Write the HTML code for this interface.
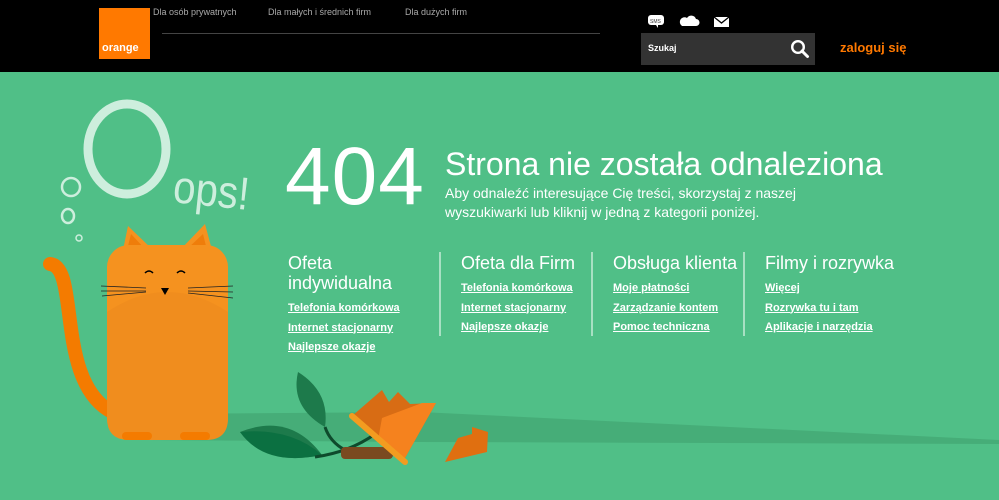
<!DOCTYPE html>
<html><head><meta charset="utf-8"><style>
*{margin:0;padding:0;box-sizing:border-box}
body{width:999px;height:500px;overflow:hidden;background:#50bf87;font-family:"Liberation Sans",sans-serif;position:relative}
.hdr{position:absolute;left:0;top:0;width:999px;height:72px;background:#000}
.abs{position:absolute}
.nav{font-size:9px;color:#aaa;top:7px}
.col h3{font-weight:normal;font-size:18px;color:#fff;line-height:20px;margin-bottom:6px}
.col a{display:block;color:#fff;font-weight:bold;font-size:11px;text-decoration:underline;line-height:19.5px}
.div{position:absolute;top:252px;width:2px;height:84px;background:#a8e0c3}
</style></head><body>
<div class="hdr">
 <div class="abs" style="left:99px;top:8px;width:51px;height:51px;background:#ff7900"></div>
 <div class="abs" style="left:102px;top:42px;color:#fff;font-weight:bold;font-size:11px">orange</div>
 <div class="abs nav" style="left:153px">Dla osób prywatnych</div>
 <div class="abs nav" style="left:268px">Dla małych i średnich firm</div>
 <div class="abs nav" style="left:405px">Dla dużych firm</div>
 <div class="abs" style="left:162px;top:33px;width:438px;height:1px;background:#444"></div>
 <svg class="abs" style="left:648px;top:14px" width="90" height="14">
  <rect x="0" y="1" width="16" height="10" rx="3" fill="#fff"/><path d="M8 11 l2 3 l0-3z" fill="#fff"/>
  <text x="2" y="9" font-size="5" font-family="Liberation Sans" fill="#333">SMS</text>
  <path d="M34 12 h14 a3.5 3.5 0 0 0 0-7 a5 5 0 0 0-9-1 a4 4 0 0 0-5 8z" fill="#fff"/>
  <rect x="66" y="3" width="15" height="10" fill="#fff"/><path d="M66 3 l7.5 6 l7.5-6" stroke="#000" stroke-width="1.3" fill="none"/>
 </svg>
 <div class="abs" style="left:641px;top:33px;width:174px;height:32px;background:#333"></div>
 <div class="abs" style="left:648px;top:43px;color:#fff;font-weight:bold;font-size:9px">Szukaj</div>
 <svg class="abs" style="left:790px;top:39px" width="20" height="20"><circle cx="8" cy="8" r="5.8" stroke="#fff" stroke-width="2.4" fill="none"/><path d="M12 12 l5.5 5.5" stroke="#fff" stroke-width="3" stroke-linecap="round"/></svg>
 <div class="abs" style="left:840px;top:40px;color:#ff7900;font-weight:bold;font-size:13px">zaloguj się</div>
</div>

<svg class="abs" style="left:0;top:72px" width="999" height="428">
 <ellipse cx="127" cy="77" rx="39" ry="45" stroke="#cdeedd" stroke-width="9" fill="none"/>
 <text x="172" y="130" font-family="Liberation Sans" font-size="46" fill="#cdeedd" transform="rotate(6 172 130)" textLength="76" lengthAdjust="spacingAndGlyphs">ops!</text>
 <circle cx="71" cy="115" r="9" stroke="#cdeedd" stroke-width="2.5" fill="none"/>
 <ellipse cx="68" cy="144" rx="6" ry="7" stroke="#cdeedd" stroke-width="2.5" fill="none"/>
 <circle cx="79" cy="166" r="3" stroke="#cdeedd" stroke-width="1.5" fill="none"/>
 <path d="M150 342 L420 340 L999 368 L999 372 L420 370 L150 368 Z" fill="#46ad78"/>
 <path d="M50 192 C80 195 55 310 112 340" stroke="#f47b00" stroke-width="14" fill="none" stroke-linecap="round"/>
 <path d="M123 178 L128 154 L153 178Z M180 178 L205 152 L212 178Z" fill="#f5921f"/>
 <path d="M127 178 L131 162 L146 178Z M186 178 L203 162 L207 178Z" fill="#ef7d0a"/>
 <rect x="107" y="173" width="121" height="195" rx="22" fill="#f5921f"/>
 <path d="M107 300 L107 240 Q167 200 228 240 L228 346 Q228 368 206 368 L129 368 Q107 368 107 346Z" fill="#f08d1e"/>
 <rect x="122" y="360" width="30" height="8" rx="4" fill="#f47b00"/><rect x="180" y="360" width="30" height="8" rx="4" fill="#f47b00"/>
 <path d="M145 201 q4-4 8 0 M177 201 q4-4 8 0" stroke="#000" stroke-width="1.5" fill="none"/>
 <path d="M161 216 h8 l-4 7z" fill="#000"/>
 <path d="M101 214 l45 2 M101 219 l45 0 M102 224 l44-4 M188 216 l45-2 M188 219 l45 1 M188 221 l45 5" stroke="#222" stroke-width=".8"/>
 <path d="M240 360 Q290 340 322 383 Q265 395 240 360Z" fill="#1d7a4b"/>
 <path d="M240 360 Q290 355 322 383 Q265 395 240 360Z" fill="#00693a" opacity=".6"/>
 <path d="M298 300 Q330 320 325 355 Q290 335 298 300Z" fill="#1d7a4b"/>
 <path d="M325 355 Q330 370 345 378 M315 385 Q350 380 375 362" stroke="#0e4a2c" stroke-width="3" fill="none"/>
 <rect x="341" y="375" width="52" height="12" rx="4" fill="#7a4a20"/>
 <path d="M352 344 L382 318 L389 330 L398 320 L410 332 L436 331 L405 386 L375 368 Z" fill="#d86c14"/>
 <path d="M382 346 L422 331 L436 331 L405 386 L378 368 Z" fill="#f5821e"/>
 <path d="M352 344 L405 390" stroke="#f39c20" stroke-width="6" stroke-linecap="round"/>
 <path d="M445 390 L458 366 L472 362 L472 355 L488 360 L487 380 Z" fill="#e06f10"/>
</svg>

<div class="abs" style="left:285px;top:132px;color:#fff;font-size:82px;line-height:90px;letter-spacing:1px">404</div>
<div class="abs" style="left:445px;top:145px;color:#fff;font-size:32px;line-height:38px">Strona nie została odnaleziona</div>
<div class="abs" style="left:445px;top:184px;color:#fff;font-size:14px;line-height:19px">Aby odnaleźć interesujące Cię treści, skorzystaj z naszej<br>wyszukiwarki lub kliknij w jedną z kategorii poniżej.</div>

<div class="abs col" style="left:288px;top:253px"><h3>Ofeta<br>indywidualna</h3><a>Telefonia komórkowa</a><a>Internet stacjonarny</a><a>Najlepsze okazje</a></div>
<div class="div" style="left:439px"></div>
<div class="abs col" style="left:461px;top:253px"><h3>Ofeta dla Firm</h3><a>Telefonia komórkowa</a><a>Internet stacjonarny</a><a>Najlepsze okazje</a></div>
<div class="div" style="left:591px"></div>
<div class="abs col" style="left:613px;top:253px"><h3>Obsługa klienta</h3><a>Moje płatności</a><a>Zarządzanie kontem</a><a>Pomoc techniczna</a></div>
<div class="div" style="left:743px"></div>
<div class="abs col" style="left:765px;top:253px"><h3>Filmy i rozrywka</h3><a>Więcej</a><a>Rozrywka tu i tam</a><a>Aplikacje i narzędzia</a></div>
</body></html>
